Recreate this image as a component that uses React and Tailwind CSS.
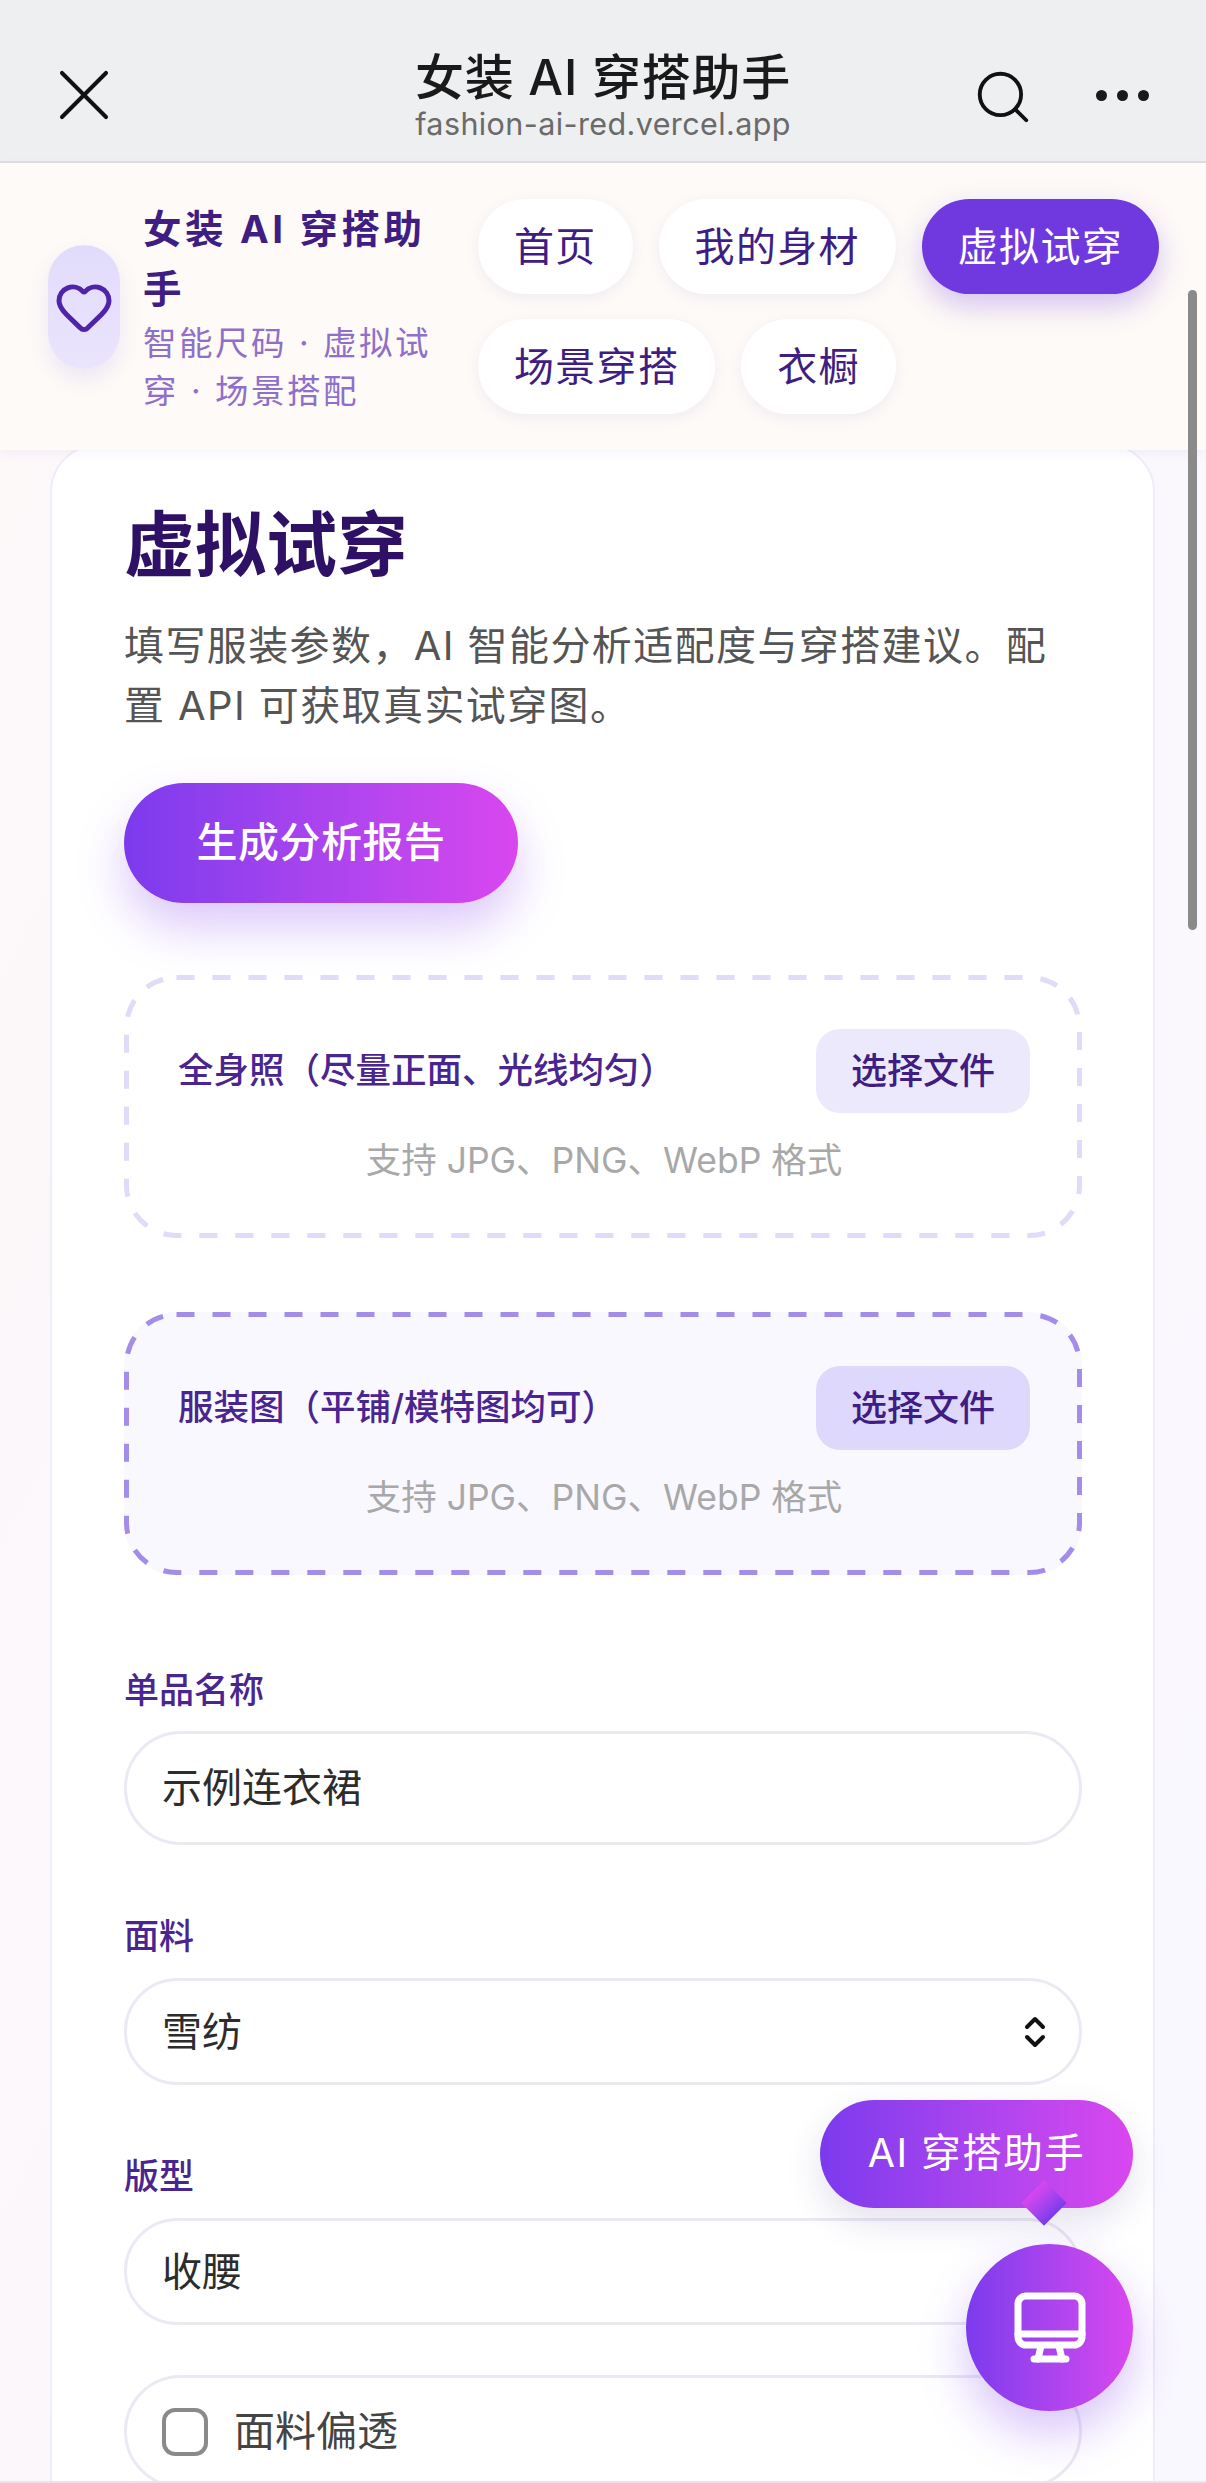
import React from 'react';
import { Heart, Search, X } from "lucide-react";

const NAV_ROW_ONE = [
  { label: '首页' },
  { label: '我的身材' },
  { label: '虚拟试穿', active: true },
];
const NAV_ROW_TWO = [{ label: '场景穿搭' }, { label: '衣橱' }];

const NavPill = ({ label, active }) => (
  <div
    className={`h-[95px] px-[36px] rounded-full flex items-center text-[40px] tracking-[1.3px] ${
      active
        ? 'bg-[#7039e0] text-white shadow-[0_12px_28px_rgba(112,57,224,0.28)]'
        : 'bg-white text-[#3f1d82] shadow-[0_4px_14px_rgba(90,60,180,0.07)]'
    }`}
  >
    {label}
  </div>
);

const TopBar = () => (
  <div className="h-[163px] bg-[#eeeff0] border-b-2 border-[#dedede] flex items-start relative">
    <X className="absolute left-[40px] top-[51px] w-[88px] h-[88px] text-[#111]" strokeWidth={1.1} />
    <div className="w-full flex flex-col items-center pt-[50px]">
      <div className="text-[49px] leading-[56px] font-medium tracking-[0.8px] text-[#1a1a1a]">女装 AI 穿搭助手</div>
      <div className="text-[30.5px] leading-[36px] tracking-[0.4px] text-[#6a6a6a]">fashion-ai-red.vercel.app</div>
    </div>
    <Search className="absolute left-[972px] top-[66px] w-[62px] h-[62px] text-[#111]" strokeWidth={1.5} />
    <div className="absolute left-[1096px] top-[90px] flex gap-[10px]">
      <span className="w-[11px] h-[11px] rounded-full bg-[#1a1a1a]" />
      <span className="w-[11px] h-[11px] rounded-full bg-[#1a1a1a]" />
      <span className="w-[11px] h-[11px] rounded-full bg-[#1a1a1a]" />
    </div>
  </div>
);

const SiteHeader = () => (
  <div className="relative z-10 h-[287px] bg-[#fdfaf7] flex items-center pl-[48px] shadow-[0_3px_10px_rgba(120,90,230,0.07)]">
    <div className="w-[72px] h-[124px] shrink-0 rounded-full bg-gradient-to-b from-[#e2dcfc] to-[#ebe4fd] flex items-center justify-center shadow-[0_10px_20px_rgba(120,90,230,0.12)]">
      <Heart className="w-[60px] h-[60px] text-[#4f24a8]" strokeWidth={2} />
    </div>
    <div className="w-[310px] ml-[23px] shrink-0">
      <div className="text-[38.5px] leading-[60px] font-bold tracking-[3.6px] text-[#3f1d82]">女装 AI 穿搭助手</div>
      <div className="text-[33.5px] leading-[48px] tracking-[2.5px] text-[#8f6fc9]">智能尺码 · 虚拟试穿 · 场景搭配</div>
    </div>
    <div className="ml-[25px] flex flex-col gap-[25px]">
      <div className="flex gap-[26px]">
        {NAV_ROW_ONE.map((item) => <NavPill key={item.label} {...item} />)}
      </div>
      <div className="flex gap-[26px]">
        {NAV_ROW_TWO.map((item) => <NavPill key={item.label} {...item} />)}
      </div>
    </div>
  </div>
);

// the dashes in the picture are longer than the browser's own dashed border
const DashedOutline = ({ color }) => (
  <svg className="absolute inset-0" width="958" height="263" fill="none">
    <rect x="2.5" y="2.5" width="953" height="258" rx="50" stroke={color} strokeWidth="5" strokeDasharray="18 18" />
  </svg>
);

const DropZone = ({ label, active }) => (
  <div
    className={`relative h-[263px] rounded-[52px] pl-[54px] pr-[52px] pt-[54px] ${active ? 'bg-[#faf8ff]' : 'bg-white'}`}
  >
    <DashedOutline color={active ? '#a48de8' : '#e0dbf8'} />
    <div className="flex items-center justify-between">
      <span className="text-[35.5px] font-medium text-[#4a2590]">{label}</span>
      <span
        className={`w-[214px] h-[84px] rounded-[24px] flex items-center justify-center text-[36px] font-medium text-[#3f1d82] ${
          active ? 'bg-[#ded8fc]' : 'bg-[#ede9fd]'
        }`}
      >
        选择文件
      </span>
    </div>
    <div className="mt-[23px] text-center text-[35.5px] leading-[50px] text-[#a8a8a8]">支持 JPG、PNG、WebP 格式</div>
  </div>
);

const FieldLabel = ({ children }) => (
  <div className="text-[35px] leading-[44px] font-medium text-[#4a2590]">{children}</div>
);

const Chevrons = () => (
  <svg width="22" height="32" viewBox="0 0 22 32" fill="none" stroke="#111" strokeWidth="4" strokeLinecap="round" strokeLinejoin="round">
    <path d="M3 11 L11 3 L19 11" />
    <path d="M3 21 L11 29 L19 21" />
  </svg>
);

const SelectBox = ({ value, tall }) => (
  <div
    className={`rounded-full border-[3px] border-[#ebe9f4] bg-white flex items-center justify-between pl-[35px] pr-[33px] text-[40px] text-[#2c2c2c] ${
      tall ? 'mt-[19px] h-[114px]' : 'mt-[20px] h-[107px]'
    }`}
  >
    <span>{value}</span>
    {!tall && <Chevrons />}
  </div>
);

const MonitorIcon = () => (
  <svg width="72" height="72" viewBox="0 0 72 72" fill="none" stroke="white" strokeWidth="7" strokeLinecap="round" strokeLinejoin="round">
    <rect x="4" y="4" width="64" height="49" rx="8" />
    <path d="M4 42 H68" />
    <path d="M27 54 L24 67 M45 54 L48 67" />
    <path d="M20 67 H52" />
  </svg>
);

const FloatingAssistant = () => (
  <>
    <div className="absolute left-[820px] top-[2100px] w-[313px] h-[108px] rounded-full bg-gradient-to-r from-[#7c3aed] to-[#d946ef] flex items-center justify-center text-white text-[39.5px] tracking-[1.5px] shadow-[0_14px_36px_rgba(60,40,120,0.14)]">
      AI 穿搭助手
    </div>
    <div className="absolute left-[1028px] top-[2187px] w-[32px] h-[32px] rotate-[45deg] bg-gradient-to-r from-[#d946ef] to-[#7c3aed]" />
    <div className="absolute left-[966px] top-[2244px] w-[167px] h-[167px] rounded-full bg-gradient-to-r from-[#7c3aed] to-[#d946ef] flex items-center justify-center shadow-[0_22px_48px_rgba(124,58,237,0.3)]">
      <MonitorIcon />
    </div>
  </>
);

export default function App() {
  return (
    <div
      className="relative h-[2483px] overflow-hidden bg-gradient-to-br from-[#fdf8f8] to-[#f9f7ff] border-b-2 border-[#e6e6ea] [text-spacing-trim:space-all]"
      style={{ fontFamily: 'Inter, "Noto Sans CJK SC", sans-serif' }}
    >
      <TopBar />
      <SiteHeader />

      <div className="mx-[50px] mt-[-6px] w-[1105px] rounded-[48px] border-2 border-[#efecfb] bg-white pl-[72px] pr-[71px] pt-[56px] pb-[60px]">
        <h1 className="text-[71px] leading-[84px] font-bold text-[#2e1065]">虚拟试穿</h1>
        <p className="mt-[30px] text-[40px] leading-[60px] tracking-[1.4px] text-[#555555]">
          填写服装参数，AI 智能分析适配度与穿搭建议。配置 API 可获取真实试穿图。
        </p>
        <div className="mt-[47px] w-[394px] h-[120px] rounded-full bg-gradient-to-r from-[#7c3aed] to-[#d946ef] flex items-center justify-center text-white text-[41px] tracking-[0.5px] font-medium shadow-[0_24px_48px_rgba(124,58,237,0.28)]">
          生成分析报告
        </div>

        <div className="mt-[72px]">
          <DropZone label="全身照（尽量正面、光线均匀）" />
        </div>
        <div className="mt-[74px]">
          <DropZone label="服装图（平铺/模特图均可）" active />
        </div>

        <div className="mt-[93px]">
          <FieldLabel>单品名称</FieldLabel>
          <SelectBox value="示例连衣裙" tall />
        </div>
        <div className="mt-[69px]">
          <FieldLabel>面料</FieldLabel>
          <SelectBox value="雪纺" />
        </div>
        <div className="mt-[69px]">
          <FieldLabel>版型</FieldLabel>
          <SelectBox value="收腰" />
        </div>
        <div className="mt-[50px] h-[113px] rounded-full border-[3px] border-[#ebe9f4] flex items-center pl-[35px] gap-[26px]">
          <span className="w-[46px] h-[48px] rounded-[13px] border-[4px] border-[#8a8a8a] bg-white" />
          <span className="text-[41px] text-[#444444]">面料偏透</span>
        </div>
      </div>

      {/* page scrollbar */}
      <div className="absolute left-[1188px] top-[290px] w-[9px] h-[640px] rounded-full bg-[#8a8a8a] z-20" />

      <FloatingAssistant />
    </div>
  );
}
